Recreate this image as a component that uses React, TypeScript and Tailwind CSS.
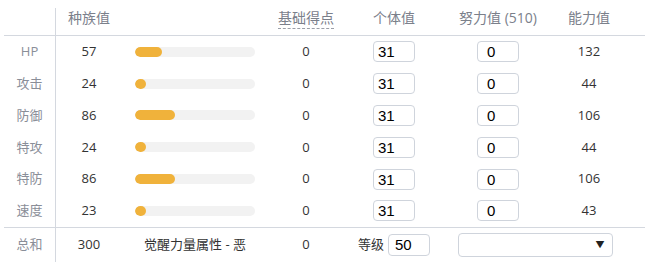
const stats = [
  { label: 'HP', base: 57, value: 132 },
  { label: '攻击', base: 24, value: 44 },
  { label: '防御', base: 86, value: 106 },
  { label: '特攻', base: 24, value: 44 },
  { label: '特防', base: 86, value: 106 },
  { label: '速度', base: 23, value: 43 },
];

const cols = 'grid grid-cols-[52px_66px_146px_76px_100px_108px_74px]';
const font = { fontFamily: '"Open Sans", "Noto Sans CJK SC", sans-serif' };
const inputFont = { fontFamily: '"Liberation Sans", Arial, sans-serif' };

export default function App() {
  return (
    <div className="bg-white w-[645px] h-[270px] pt-[8px] pl-[4px] text-[13px] text-[#333]" style={font}>
      {/* Header */}
      <div className={`${cols} h-[28px] border-b border-[#d4d8df] text-[14px] text-[#7b808b] leading-5`}>
        <div className="border-r border-[#d4d8df]" />
        <div className="text-center">种族值</div>
        <div />
        <div className="text-center">
          <span className="border-b border-dashed border-[#9a9ea7] pb-[1px]">基础得点</span>
        </div>
        <div className="text-center">个体值</div>
        <div className="text-center">努力值 (510)</div>
        <div className="text-center">能力值</div>
      </div>

      {/* Stat rows */}
      {stats.map((s) => (
        <div key={s.label} className={`${cols} h-[31.8px] items-center`}>
          <div className="h-full flex items-center justify-center border-r border-[#d4d8df] text-[#8a8e98]">
            {s.label}
          </div>
          <div className="text-center">{s.base}</div>
          <div className="pl-[13px]">
            <div className="w-[120px] h-[10px] rounded-full bg-[#f2f2f2] overflow-hidden">
              <div
                className="h-full rounded-full bg-[#f0b23b]"
                style={{ width: Math.max(10, (s.base / 255) * 120) }}
              />
            </div>
          </div>
          <div className="text-center">0</div>
          <div className="flex justify-center">
            <div className="w-[42px] h-[21px] border border-[#cfd4dc] rounded-[4px] pl-[4px] text-[15px] leading-[19px] text-black" style={inputFont}>
              31
            </div>
          </div>
          <div className="flex justify-center">
            <div className="w-[42px] h-[21px] border border-[#cfd4dc] rounded-[4px] pl-[9px] text-[15px] leading-[19px] text-black" style={inputFont}>
              0
            </div>
          </div>
          <div className="text-center">{s.value}</div>
        </div>
      ))}

      {/* Total row */}
      <div className={`${cols} h-[35px] items-center border-t border-[#d4d8df]`}>
        <div className="h-full flex items-center justify-center border-r border-[#d4d8df] text-[#8a8e98]">
          总和
        </div>
        <div className="text-center">300</div>
        <div className="text-center">觉醒力量属性 - 恶</div>
        <div className="text-center">0</div>
        <div className="flex justify-center items-center gap-[4px]">
          <span>等级</span>
          <div className="w-[42px] h-[22px] border border-[#cfd4dc] rounded-[4px] pl-[6px] text-[15px] leading-[20px] text-black" style={inputFont}>
            50
          </div>
        </div>
        <div className="col-span-2 flex justify-center">
          <div className="w-[155px] h-[24px] border border-[#cfd4dc] rounded-[4px] flex items-center justify-end pr-[7px] text-[9px] text-[#222]">
            ▼
          </div>
        </div>
      </div>
    </div>
  );
}
